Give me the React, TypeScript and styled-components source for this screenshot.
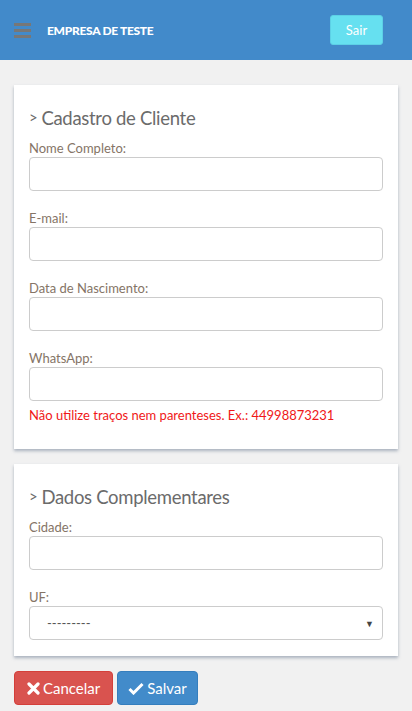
import React from "react";
import styled, { createGlobalStyle } from "styled-components";

const Global = createGlobalStyle`
  * { box-sizing: border-box; }
  html, body { margin: 0; padding: 0; background: #f1f1f1; }
  body { font-family: Lato, "Open Sans", sans-serif; }
`;

const Header = styled.header`
  height: 60px;
  background: #428aca;
  display: flex;
  align-items: center;
  padding: 0 29px 0 14px;
`;

const Burger = styled.div`
  width: 17px;
  display: flex;
  flex-direction: column;
  gap: 3px;
  margin-top: 1px;
  span {
    display: block;
    height: 3px;
    background: #777;
  }
`;

const Brand = styled.div`
  margin-left: 16px;
  color: #fff;
  font-weight: 900;
  font-size: 12px;
  letter-spacing: -0.3px;
  flex: 1;
`;

const ExitButton = styled.button`
  height: 30px;
  width: 53px;
  background: #66e0f0;
  border: 1px solid #5dd0e6;
  border-radius: 3px;
  color: #fff;
  font-family: inherit;
  font-size: 13px;
  padding: 0;
`;

const Main = styled.main`
  padding: 25px 14px 8px;
  display: flex;
  flex-direction: column;
  gap: 15px;
`;

const Card = styled.section<{ $pb: number }>`
  background: #fff;
  box-shadow: 0 2px 3px rgba(120, 135, 155, 0.6);
  padding: 20px 15px ${(p) => p.$pb}px;
`;

const Title = styled.h2`
  margin: 0;
  font-weight: 400;
  font-size: 18.5px;
  letter-spacing: -0.3px;
  color: #6b6b6b;
  display: flex;
  align-items: center;
  height: 26px;
`;

const Chevron = styled.span`
  font-size: 15px;
  margin-right: 4px;
  position: relative;
  top: -1px;
`;

const Field = styled.div`
  display: flex;
  flex-direction: column;
  & + & { margin-top: 10px; }
`;

const Label = styled.label`
  font-size: 13px;
  color: #857466;
  height: 18px;
  line-height: 18px;
  margin-top: 8px;
`;

const Input = styled.input`
  height: 34px;
  border: 1px solid #ccc;
  border-radius: 4px;
  background: #fff;
  font-family: inherit;
  font-size: 13px;
  padding: 0 12px;
`;

const SelectBox = styled.div`
  height: 34px;
  border: 1px solid #ccc;
  border-radius: 4px;
  background: #fff;
  display: flex;
  align-items: center;
  padding: 0 8px 0 17px;
  font-size: 13px;
  color: #555;
  justify-content: space-between;
`;

const Caret = styled.span`
  font-size: 9px;
  color: #444;
`;

const Help = styled.div`
  color: #f01818;
  font-size: 13px;
  margin-top: 6px;
`;

const Actions = styled.div`
  display: flex;
  gap: 4px;
`;

const Btn = styled.button<{ $bg: string; $border: string; $px: number }>`
  height: 34px;
  background: ${(p) => p.$bg};
  border: 1px solid ${(p) => p.$border};
  border-radius: 4px;
  color: #fff;
  font-family: inherit;
  font-size: 15px;
  padding: 0 ${(p) => p.$px}px;
  display: flex;
  align-items: center;
  gap: 3px;
`;

export default function App() {
  return (
    <>
      <Global />
      <Header>
        <Burger>
          <span />
          <span />
          <span />
        </Burger>
        <Brand>EMPRESA DE TESTE</Brand>
        <ExitButton>Sair</ExitButton>
      </Header>
      <Main>
        <Card $pb={26}>
          <Title>
            <Chevron>&gt;</Chevron>Cadastro de Cliente
          </Title>
          <Field>
            <Label>Nome Completo:</Label>
            <Input />
          </Field>
          <Field>
            <Label>E-mail:</Label>
            <Input />
          </Field>
          <Field>
            <Label>Data de Nascimento:</Label>
            <Input />
          </Field>
          <Field>
            <Label>WhatsApp:</Label>
            <Input />
            <Help>Não utilize traços nem parenteses. Ex.: 44998873231</Help>
          </Field>
        </Card>
        <Card $pb={16}>
          <Title>
            <Chevron>&gt;</Chevron>Dados Complementares
          </Title>
          <Field>
            <Label>Cidade:</Label>
            <Input />
          </Field>
          <Field>
            <Label>UF:</Label>
            <SelectBox>
              <span>---------</span>
              <Caret>▼</Caret>
            </SelectBox>
          </Field>
        </Card>
        <Actions>
          <Btn $bg="#d9534f" $border="#d43f3a" $px={12}>
            <svg width="13" height="13" viewBox="0 0 13 13">
              <path d="M2 2 L11 11 M11 2 L2 11" stroke="#fff" strokeWidth="3.2" strokeLinecap="round" />
            </svg>
            Cancelar
          </Btn>
          <Btn $bg="#428bca" $border="#357ebd" $px={10}>
            <svg width="16" height="13" viewBox="0 0 16 13">
              <path d="M1.5 7 L5.5 11 L14.5 2" stroke="#fff" strokeWidth="3" fill="none" />
            </svg>
            Salvar
          </Btn>
        </Actions>
      </Main>
    </>
  );
}
